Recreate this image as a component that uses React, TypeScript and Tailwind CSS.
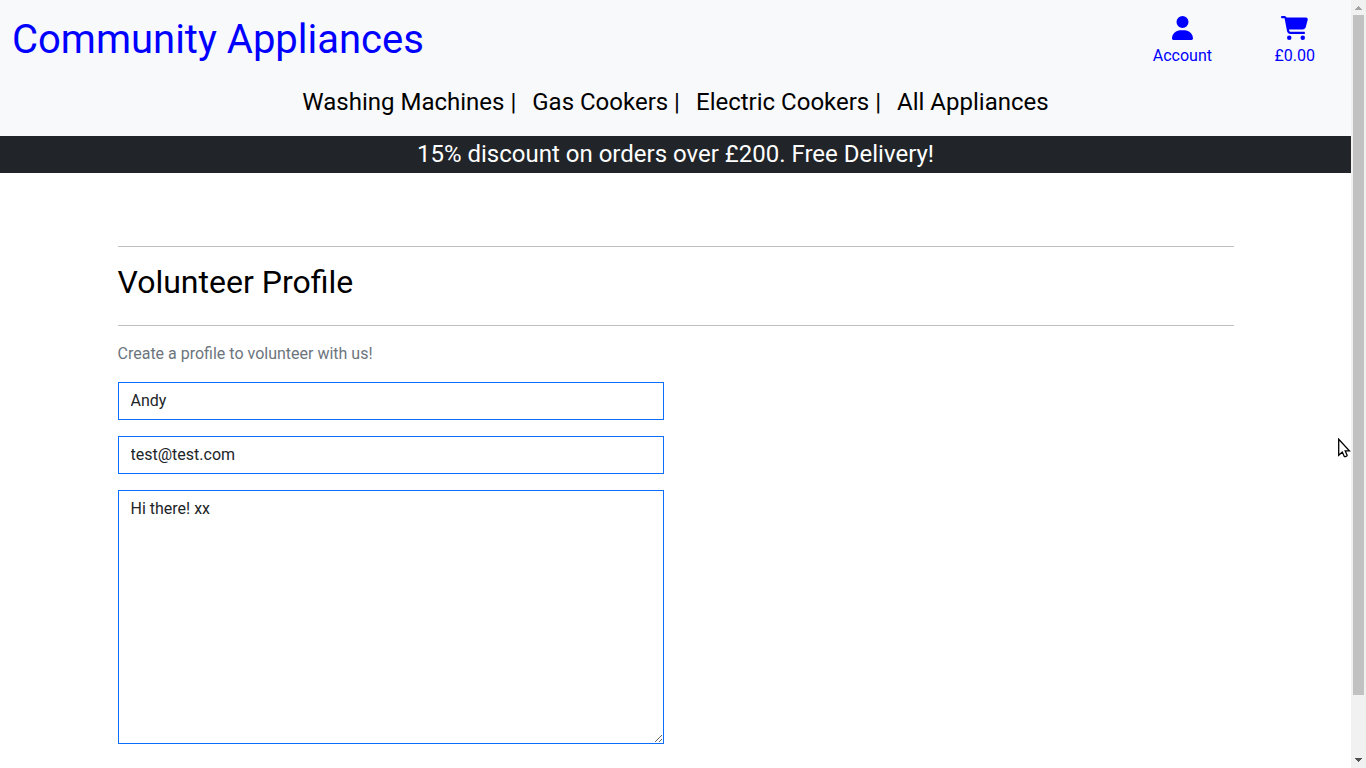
import React from "react";
import { FaCartShopping, FaUser } from "react-icons/fa6";

const categories = ["Washing Machines", "Gas Cookers", "Electric Cookers", "All Appliances"];

function Header() {
  return (
    <header className="h-[136px] bg-[#f8f9fa] pt-4">
      <div className="flex h-[50px] items-start justify-between pl-3">
        <a href="#" className="text-[40px] leading-[48px] text-[#0000ff]">Community Appliances</a>
        <div className="flex text-[#0000ff]">
          <a href="#" className="flex w-[112px] flex-col items-center">
            <FaUser className="h-6 w-[21px]" />
            <span className="mt-1 leading-6">Account</span>
          </a>
          <a href="#" className="flex w-[112.6px] flex-col items-center">
            <FaCartShopping className="h-6 w-[27px]" />
            <span className="mt-1 leading-6">£0.00</span>
          </a>
        </div>
      </div>
      <nav className="mt-[18px] flex justify-center gap-4 text-2xl leading-9 text-black">
        {categories.map((name, i) => (
          <a href="#" key={name} className="whitespace-nowrap">
            {i < categories.length - 1 ? `${name} |` : name}
          </a>
        ))}
      </nav>
    </header>
  );
}

function ProfileForm() {
  const field =
    "block w-full rounded-none border border-[#0d6efd] bg-white px-3 py-1.5 text-base leading-6 text-[#212529] outline-none";
  return (
    <main className="mx-auto w-[1140px] px-3 pt-[73px]">
      <hr className="border-t border-[#bfbfbf]" />
      <h2 className="pt-4 text-[32px] leading-[38.4px] text-black">Volunteer Profile</h2>
      <hr className="mt-[23.6px] border-t border-[#bfbfbf]" />
      <p className="py-4 leading-6 text-[#6c757d]">Create a profile to volunteer with us!</p>
      <form className="flex w-[546px] flex-col gap-4">
        <input className={field} defaultValue="Andy" />
        <input className={field} defaultValue="test@test.com" />
        <textarea className={`${field} h-[254px] resize-y`} defaultValue="Hi there! xx" />
      </form>
    </main>
  );
}

function Scrollbar() {
  return (
    <div className="flex w-[15px] shrink-0 flex-col items-center bg-[#f1f1f1]">
      <svg className="h-[15px] w-[15px] shrink-0" viewBox="0 0 15 15" shapeRendering="crispEdges" fill="#a3a3a3">
        <path d="M7 6h1v1h1v1h1v1h1v1H4V9h1V8h1V7h1z" />
      </svg>
      <div className="h-[680px] w-[11px] bg-[#c1c1c1]" />
      <svg className="mt-auto h-[15px] w-[15px] shrink-0" viewBox="0 0 15 15" shapeRendering="crispEdges" fill="#505050">
        <path d="M4 5h7v1h-1v1H9v1H8v1H7V8H6V7H5V6H4z" />
      </svg>
    </div>
  );
}

export default function App() {
  return (
    <div className="relative flex h-screen overflow-hidden bg-white font-['Roboto',sans-serif] text-base">
      <div className="min-w-0 flex-1 overflow-hidden">
        <Header />
        <div className="h-[37px] bg-[#212529] text-center text-2xl leading-9 text-white">
          15% discount on orders over £200. Free Delivery!
        </div>
        <ProfileForm />
      </div>
      <Scrollbar />
      <svg className="pointer-events-none absolute left-[1338px] top-[438px] h-[22px] w-[14px]" viewBox="0 0 14 22">
        <path d="M.7 1.2v16.1l3.6-3.3 2 4.4c.3.8 3.2-.3 2.8-1.2l-1.9-4.4h4.2z" fill="#fff" stroke="#000" strokeWidth="1.3" />
      </svg>
    </div>
  );
}
